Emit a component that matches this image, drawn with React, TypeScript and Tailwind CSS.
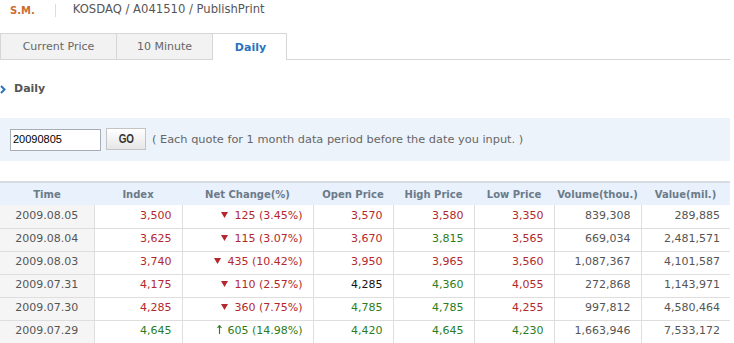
import React from "react";

const RED = "text-[#b3282d]";
const GREEN = "text-[#2a7d1e]";
const BLACK = "text-[#111]";

type C = "r" | "g" | "k";
const cls = (c: C) => (c === "r" ? RED : c === "g" ? GREEN : BLACK);

type Row = {
  time: string;
  index: [string, C];
  change: { dir: "down" | "up"; text: string; c: C };
  open: [string, C];
  high: [string, C];
  low: [string, C];
  vol: string;
  val: string;
};

const rows: Row[] = [
  { time: "2009.08.05", index: ["3,500", "r"], change: { dir: "down", text: "125 (3.45%)", c: "r" }, open: ["3,570", "r"], high: ["3,580", "r"], low: ["3,350", "r"], vol: "839,308", val: "289,885" },
  { time: "2009.08.04", index: ["3,625", "r"], change: { dir: "down", text: "115 (3.07%)", c: "r" }, open: ["3,670", "r"], high: ["3,815", "g"], low: ["3,565", "r"], vol: "669,034", val: "2,481,571" },
  { time: "2009.08.03", index: ["3,740", "r"], change: { dir: "down", text: "435 (10.42%)", c: "r" }, open: ["3,950", "r"], high: ["3,965", "r"], low: ["3,560", "r"], vol: "1,087,367", val: "4,101,587" },
  { time: "2009.07.31", index: ["4,175", "r"], change: { dir: "down", text: "110 (2.57%)", c: "r" }, open: ["4,285", "k"], high: ["4,360", "g"], low: ["4,055", "r"], vol: "272,868", val: "1,143,971" },
  { time: "2009.07.30", index: ["4,285", "r"], change: { dir: "down", text: "360 (7.75%)", c: "r" }, open: ["4,785", "g"], high: ["4,785", "g"], low: ["4,255", "r"], vol: "997,812", val: "4,580,464" },
  { time: "2009.07.29", index: ["4,645", "g"], change: { dir: "up", text: "605 (14.98%)", c: "g" }, open: ["4,420", "g"], high: ["4,645", "g"], low: ["4,230", "g"], vol: "1,663,946", val: "7,533,172" },
];

const headers = ["Time", "Index", "Net Change(%)", "Open Price", "High Price", "Low Price", "Volume(thou.)", "Value(mil.)"];
const widths = [94, 88, 131, 80, 81, 80, 87, 89];

function Down() {
  return (
    <svg width="7" height="6" viewBox="0 0 7 6" className="inline-block mr-[6px] align-[1px]">
      <polygon points="0,0 7,0 3.5,6" fill="#b3282d" />
    </svg>
  );
}

function Up() {
  return (
    <svg width="5" height="9" viewBox="0 0 5 9" className="inline-block mr-[5px] align-[0px]">
      <path d="M2.5 0.5 L2.5 9 M0.5 2.8 L2.5 0.6 L4.5 2.8" stroke="#2a7d1e" strokeWidth="1.1" fill="none" />
    </svg>
  );
}

export default function App() {
  const cell = "border-r border-b border-[#dedede] pr-[10px] text-right h-[23px] p-0";
  return (
    <div className="w-[734px] h-[343px] overflow-hidden bg-white font-['DejaVu_Sans',sans-serif] text-[11px]">
      {/* breadcrumb */}
      <div className="flex items-center h-[20px] pl-[10px]">
        <span className="font-bold text-[10px] text-[#cc6d35]">S.M.</span>
        <span className="ml-[20px] w-px h-[13px] bg-[#dcdcdc]" />
        <span className="ml-[17px] text-[11.6px] text-[#555]">KOSDAQ / A041510 / PublishPrint</span>
      </div>

      {/* tabs */}
      <div className="mt-[13px] flex h-[27px] w-[730px]">
        <div className="w-[117px] h-full flex items-center justify-center pt-[2px] bg-[#f2f2f2] border border-[#d6d6d6] text-[#666]">
          Current Price
        </div>
        <div className="w-[96px] h-full flex items-center justify-center pt-[2px] bg-[#f2f2f2] border-y border-r border-[#d6d6d6] text-[#666]">
          10 Minute
        </div>
        <div className="w-[74px] h-full flex items-center justify-center pt-[2px] pl-[2px] bg-white border-t border-r border-[#d6d6d6] font-bold text-[#2a73bd]">
          Daily
        </div>
        <div className="flex-1 h-full border-b border-[#d6d6d6]" />
      </div>

      {/* section title */}
      <div className="mt-[19px] h-[20px] flex items-center">
        <svg width="6" height="9" viewBox="0 0 6 9">
          <path d="M1 1 L4.5 4.5 L1 8" stroke="#2a73bd" strokeWidth="2" fill="none" />
        </svg>
        <span className="ml-[8px] font-bold text-[#555]">Daily</span>
      </div>

      {/* search box */}
      <div className="mt-[19px] w-[730px] h-[43px] bg-[#edf3fb] flex items-center pl-[10px]">
        <div className="w-[91px] h-[22px] bg-white border border-[#a7adb5] flex items-center pl-[2px] font-['Liberation_Sans',sans-serif] text-[11px] text-black">
          20090805
        </div>
        <button className="ml-[5px] w-[40px] h-[22px] -mt-[2px] border border-[#c4c4c4] bg-gradient-to-b from-white to-[#e6e6e6] flex items-center justify-center">
          <span className="font-['Liberation_Sans',sans-serif] font-bold text-[12px] text-[#333] scale-x-[0.82] inline-block">GO</span>
        </button>
        <span className="ml-[6px] text-[11.33px] text-[#666]">( Each quote for 1 month data period before the date you input. )</span>
      </div>

      {/* table */}
      <table className="mt-[20px] w-[730px] table-fixed border-collapse">
        <colgroup>
          {widths.map((w, i) => (
            <col key={i} style={{ width: w }} />
          ))}
        </colgroup>
        <thead>
          <tr className="border-t-2 border-[#d8dce1]">
            {headers.map((h) => (
              <th key={h} className="h-[23px] p-0 bg-[#e8f1fc] text-center font-bold text-[10px] text-[#6c7a89]">
                {h}
              </th>
            ))}
          </tr>
        </thead>
        <tbody>
          {rows.map((r) => (
            <tr key={r.time}>
              <td className="border-r border-b border-[#dedede] bg-[#f5f5f5] text-center text-[#555] h-[23px] p-0">{r.time}</td>
              <td className={`${cell} ${cls(r.index[1])}`}>{r.index[0]}</td>
              <td className={`${cell} ${cls(r.change.c)}`}>
                {r.change.dir === "down" ? <Down /> : <Up />}
                {r.change.text}
              </td>
              <td className={`${cell} ${cls(r.open[1])}`}>{r.open[0]}</td>
              <td className={`${cell} ${cls(r.high[1])}`}>{r.high[0]}</td>
              <td className={`${cell} ${cls(r.low[1])}`}>{r.low[0]}</td>
              <td className={`${cell} text-[#555]`}>{r.vol}</td>
              <td className="border-b border-[#dedede] pr-[10px] text-right h-[23px] p-0 text-[#555]">{r.val}</td>
            </tr>
          ))}
        </tbody>
      </table>
    </div>
  );
}
